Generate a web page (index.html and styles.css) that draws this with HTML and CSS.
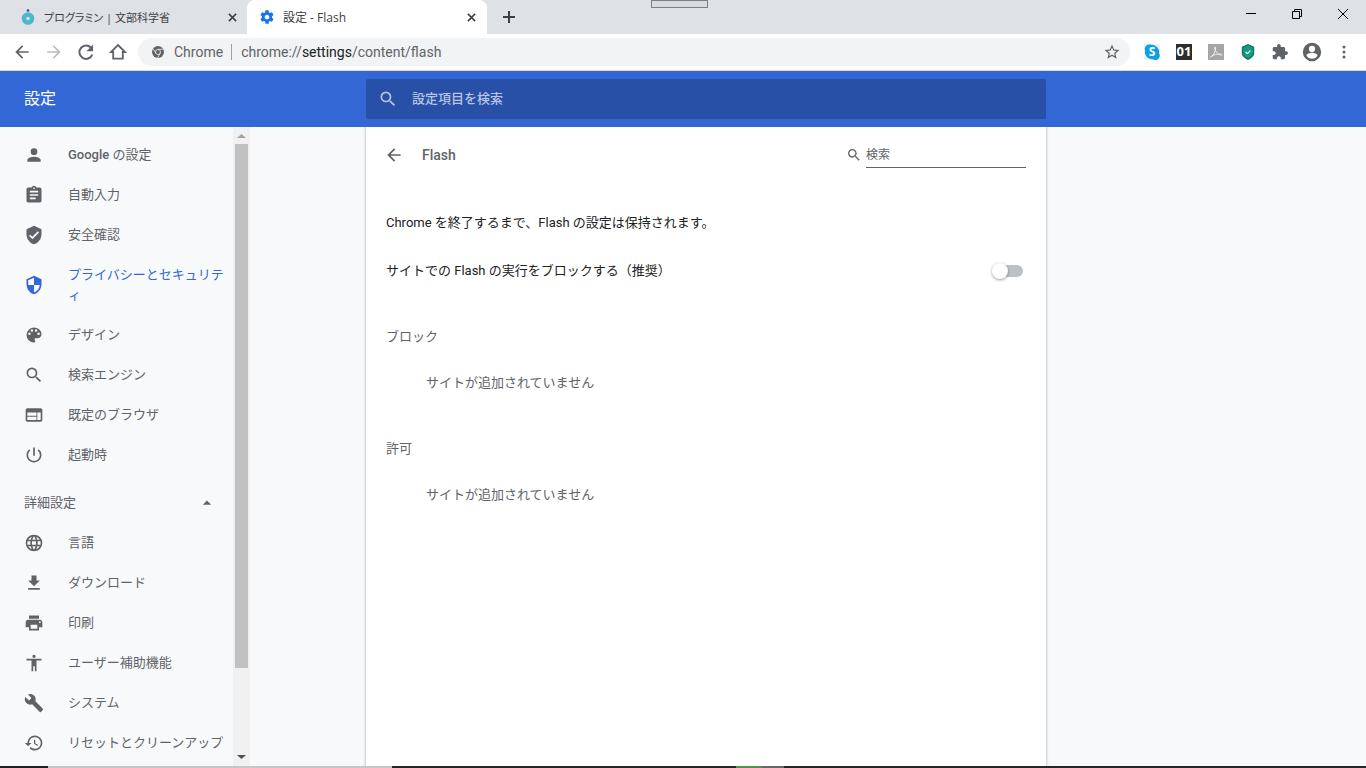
FILE: index.html
```html
<!DOCTYPE html>
<html lang="ja">
<head>
<meta charset="utf-8">
<meta name="viewport" content="width=device-width, initial-scale=1">
<title>設定 - Flash</title>
<link rel="stylesheet" href="styles.css">
</head>
<body>
<svg class="sprite" aria-hidden="true">
  <symbol id="i-close" viewBox="0 0 10 10"><path d="M1 1l8 8M9 1l-8 8" fill="none" stroke="currentColor" stroke-width="1.7"/></symbol>
  <symbol id="i-search" viewBox="0 0 24 24"><path d="M15.5 14h-.79l-.28-.27A6.47 6.47 0 0 0 16 9.5 6.5 6.5 0 1 0 9.5 16c1.61 0 3.09-.59 4.23-1.57l.27.28v.79l5 4.99L20.49 19l-4.99-5zm-6 0C7.01 14 5 11.99 5 9.5S7.01 5 9.5 5 14 7.01 14 9.5 11.99 14 9.5 14z"/></symbol>
  <symbol id="i-back" viewBox="0 0 24 24"><path d="M20 11H7.83l5.59-5.59L12 4l-8 8 8 8 1.41-1.41L7.83 13H20v-2z"/></symbol>
  <symbol id="i-gear" viewBox="0 0 24 24"><path d="M19.43 12.98c.04-.32.07-.64.07-.98s-.03-.66-.07-.98l2.11-1.65c.19-.15.24-.42.12-.64l-2-3.46c-.12-.22-.39-.3-.61-.22l-2.49 1c-.52-.4-1.08-.73-1.69-.98l-.38-2.65C14.46 2.18 14.25 2 14 2h-4c-.25 0-.46.18-.49.42l-.38 2.65c-.61.25-1.17.59-1.69.98l-2.49-1c-.23-.09-.49 0-.61.22l-2 3.46c-.13.22-.07.49.12.64l2.11 1.65c-.04.32-.07.65-.07.98s.03.66.07.98l-2.11 1.65c-.19.15-.24.42-.12.64l2 3.46c.12.22.39.3.61.22l2.49-1c.52.4 1.08.73 1.69.98l.38 2.65c.03.24.24.42.49.42h4c.25 0 .46-.18.49-.42l.38-2.65c.61-.25 1.17-.59 1.69-.98l2.49 1c.23.09.49 0 .61-.22l2-3.46c.12-.22.07-.49-.12-.64l-2.11-1.65zM12 15.5c-1.93 0-3.5-1.57-3.5-3.5s1.57-3.5 3.5-3.5 3.5 1.57 3.5 3.5-1.57 3.5-3.5 3.5z"/></symbol>
</svg>

<header class="tabstrip">
  <div class="tab">
    <svg class="favicon" viewBox="0 0 16 16" aria-hidden="true"><circle cx="8" cy="1.500" r="1.300" fill="#174ea6"/><circle cx="8" cy="9.500" r="6.300" fill="#4fb8c8"/><circle cx="8" cy="9.500" r="1.800" fill="#c5e9ee"/></svg>
    <span class="tab-title">プログラミン | 文部科学省</span>
    <button class="tab-close" aria-label="タブを閉じる"><svg class="s9"><use href="#i-close"/></svg></button>
  </div>
  <div class="tab tab-active">
    <svg class="favicon blue"><use href="#i-gear"/></svg>
    <span class="tab-title">設定 - Flash</span>
    <button class="tab-close" aria-label="タブを閉じる"><svg class="s9"><use href="#i-close"/></svg></button>
  </div>
  <button class="new-tab" aria-label="新しいタブ"><svg class="s12" viewBox="0 0 12 12"><path d="M6 0v12M0 6h12" stroke="currentColor" stroke-width="2"/></svg></button>
  <div class="window-buttons">
    <button aria-label="最小化"><svg class="s10" viewBox="0 0 10 10"><path d="M0 4.500h10" stroke="#000"/></svg></button>
    <button aria-label="元に戻す"><svg class="s10" viewBox="0 0 10 10"><path d="M.5 2.500h7v7h-7zM2.500 2.500v-2h7v7h-2" fill="none" stroke="#000"/></svg></button>
    <button aria-label="閉じる"><svg class="s10" viewBox="0 0 10 10"><path d="M0 0l10 10M10 0L0 10" stroke="#000"/></svg></button>
  </div>
  <div class="grip"></div>
</header>

<div class="toolbar">
  <button class="tool" aria-label="戻る"><svg class="s20"><use href="#i-back"/></svg></button>
  <button class="tool tool-off" aria-label="進む"><svg class="s20" viewBox="0 0 24 24"><path d="M4 11h12.170l-5.590-5.590L12 4l8 8-8 8-1.410-1.410L16.170 13H4z"/></svg></button>
  <button class="tool" aria-label="再読み込み"><svg class="s20" viewBox="0 0 24 24"><path d="M18.500 7.500A8 8 0 1 0 19.600 15" fill="none" stroke="currentColor" stroke-width="2.400"/><path d="M20.500 3v8h-8z"/></svg></button>
  <button class="tool" aria-label="ホーム"><svg class="s20" viewBox="0 0 20 20"><path d="M10 3l7 7h-2.200v6.700H5.200V10H3z" fill="none" stroke="currentColor" stroke-width="1.800"/></svg></button>
  <div class="omnibox">
    <svg class="s12 gray" viewBox="0 0 24 24" aria-hidden="true"><circle cx="12" cy="12" r="12"/><circle cx="12" cy="12" r="5" fill="none" stroke="#f1f3f4" stroke-width="1.600"/><path d="M12 6.500h11M7.500 14.500L2 5M16.500 14.500L11 24" stroke="#f1f3f4" stroke-width="1.500"/></svg>
    <span class="origin">Chrome</span>
    <span class="url" role="textbox" aria-label="アドレス">chrome://<b>settings</b>/content/flash</span>
    <button class="star" aria-label="ブックマーク"><svg class="s18" viewBox="0 0 24 24"><path d="M22 9.240l-7.190-.62L12 2 9.190 8.630 2 9.240l5.460 4.730L5.820 21 12 17.270 18.180 21l-1.630-7.030L22 9.240zM12 15.400l-3.760 2.270 1-4.280-3.320-2.880 4.380-.38L12 6.100l1.710 4.040 4.380.38-3.320 2.880 1 4.280L12 15.400z"/></svg></button>
  </div>
  <button class="tool" aria-label="Skype"><svg class="s16" viewBox="0 0 16 16"><path d="M0 0h16v16H0z" fill="#eef1f3"/><path d="M5 .6a4.400 4.400 0 0 1 3 .2 7.200 7.200 0 0 1 7 8.500 4.300 4.300 0 0 1-6 5.900A7.200 7.200 0 0 1 1.100 6.600 4.300 4.300 0 0 1 5 .6z" fill="#0aa1e2"/><text x="8" y="12" class="skype-s">S</text></svg></button>
  <button class="tool" aria-label="01"><span class="badge">01</span></button>
  <button class="tool" aria-label="PDF"><svg class="s16" viewBox="0 0 16 16"><path d="M0 0h16v16H0z" fill="#a5a5a5"/><path d="M2.500 13.200c3-2 5.500-6 5-9.600-.2-1.400-1.400-.6-1 .6 1 3.800 3.600 6.300 6.600 7 1.200.1 1-1.200-.6-1.200-3.600-.1-7 .9-9.400 2.600-.7.700-.9.900-.6.600z" fill="none" stroke="#eee" stroke-width="1"/></svg></button>
  <button class="tool" aria-label="保護"><svg class="s16" viewBox="0 0 16 16"><path d="M8 0l6.200 2.800v6.700c0 2.600-3.200 5.100-6.200 6.500-3-1.400-6.200-3.900-6.200-6.500V2.800z" fill="#0c7a62"/><path d="M8 1.500l4.800 2.300v5.500c0 2-2.300 3.900-4.800 5.100-2.500-1.200-4.800-3.100-4.800-5.100V3.800z" fill="#169b7c"/><path d="M5.700 8l1.700 1.700 3-3" fill="none" stroke="#fff" stroke-width="1.200"/></svg></button>
  <button class="tool" aria-label="拡張機能"><svg class="s16" viewBox="1 1 22 22"><path d="M20.500 11H19V7c0-1.100-.9-2-2-2h-4V3.500a2.500 2.500 0 0 0-5 0V5H4c-1.100 0-1.990.9-1.990 2v3.800H3.500c1.490 0 2.700 1.210 2.700 2.700s-1.210 2.700-2.700 2.700H2V20c0 1.100.9 2 2 2h3.800v-1.500c0-1.490 1.210-2.700 2.700-2.700s2.700 1.210 2.700 2.700V22H17c1.100 0 2-.9 2-2v-4h1.500a2.500 2.500 0 0 0 0-5z"/></svg></button>
  <button class="tool" aria-label="プロフィール"><svg class="s22" viewBox="0 0 24 24"><path d="M12 2a10 10 0 1 0 0 20 10 10 0 0 0 0-20zm0 3.200a3.400 3.400 0 1 1 0 6.800 3.400 3.400 0 0 1 0-6.800zm0 14.200a7.200 7.200 0 0 1-6-3.600c0-2 4-3 6-3s6 1 6 3a7.200 7.200 0 0 1-6 3.600z"/></svg></button>
  <button class="tool" aria-label="メニュー"><svg class="s18" viewBox="0 0 18 18"><circle cx="9" cy="4" r="1.500"/><circle cx="9" cy="9" r="1.500"/><circle cx="9" cy="14" r="1.500"/></svg></button>
</div>

<div class="appbar">
  <h1>設定</h1>
  <label class="appsearch"><svg class="s20" aria-hidden="true"><use href="#i-search"/></svg><input type="search" placeholder="設定項目を検索" aria-label="設定項目を検索"></label>
</div>

<div class="content">
  <div class="sidebar">
    <nav class="menu" aria-label="設定">
      <a href="#google"><svg class="s20" viewBox="0 0 24 24"><path d="M12 12a4 4 0 1 0 0-8 4 4 0 0 0 0 8zm0 2c-2.670 0-8 1.340-8 4v2h16v-2c0-2.660-5.330-4-8-4z"/></svg><span><b>Google</b> の設定</span></a>
      <a href="#autofill"><svg class="s20" viewBox="0 0 24 24"><path d="M19 3h-4.180a3 3 0 0 0-5.640 0H5c-1.100 0-2 .9-2 2v14c0 1.100.9 2 2 2h14c1.100 0 2-.9 2-2V5c0-1.100-.9-2-2-2zm-7 0a1 1 0 1 1 0 2 1 1 0 0 1 0-2zm2 14H7v-2h7v2zm3-4H7v-2h10v2zm0-4H7V7h10v2z"/></svg><span>自動入力</span></a>
      <a href="#safety"><svg class="s20" viewBox="0 0 24 24"><path d="M12 1L3 5v6c0 5.550 3.840 10.740 9 12 5.160-1.260 9-6.450 9-12V5l-9-4zm-2 16l-4-4 1.410-1.410L10 14.170l6.590-6.590L18 9l-8 8z"/></svg><span>安全確認</span></a>
      <a href="#privacy" class="selected" aria-current="page"><svg class="s20" viewBox="0 0 24 24"><path d="M12 1L3 5v6c0 5.550 3.840 10.740 9 12 5.160-1.260 9-6.450 9-12V5l-9-4zm0 10.990h7c-.53 4.120-3.280 7.790-7 8.940V12H5V6.300l7-3.110v8.800z"/></svg><span>プライバシーとセキュリティ</span></a>
      <a href="#design"><svg class="s20" viewBox="0 0 24 24"><path d="M12 3a9 9 0 0 0 0 18c.83 0 1.500-.67 1.500-1.500 0-.39-.15-.74-.39-1.010-.23-.26-.38-.61-.38-.99 0-.83.67-1.500 1.500-1.500H16a5 5 0 0 0 5-5c0-4.420-4.030-8-9-8zm-5.500 9a1.500 1.500 0 1 1 0-3 1.500 1.500 0 0 1 0 3zm3-4a1.500 1.500 0 1 1 0-3 1.500 1.500 0 0 1 0 3zm5 0a1.500 1.500 0 1 1 0-3 1.500 1.500 0 0 1 0 3zm3 4a1.500 1.500 0 1 1 0-3 1.500 1.500 0 0 1 0 3z"/></svg><span>デザイン</span></a>
      <a href="#engine"><svg class="s20"><use href="#i-search"/></svg><span>検索エンジン</span></a>
      <a href="#browser"><svg class="s20" viewBox="0 0 24 24"><path d="M20 4H4c-1.100 0-1.990.9-1.990 2L2 18c0 1.100.9 2 2 2h16c1.100 0 2-.9 2-2V6c0-1.100-.9-2-2-2zm-5 14H4v-4h11v4zm0-5H4V9h11v4zm5 5h-4V9h4v9z"/></svg><span>既定のブラウザ</span></a>
      <a href="#startup"><svg class="s20" viewBox="0 0 24 24"><path d="M13 3h-2v10h2V3zm4.830 2.170l-1.420 1.420A6.920 6.920 0 0 1 19 12a7 7 0 1 1-11.420-5.420L6.170 5.170A9 9 0 1 0 21 12a8.930 8.930 0 0 0-3.170-6.830z"/></svg><span>起動時</span></a>
      <button class="advanced" aria-expanded="true"><span>詳細設定</span><svg class="s20" viewBox="0 0 24 24"><path d="M7 14l5-5 5 5z"/></svg></button>
      <a href="#lang"><svg class="s20" viewBox="0 0 24 24"><path d="M11.990 2a10 10 0 1 0 .01 20 10 10 0 0 0-.01-20zm6.930 6h-2.950a15.650 15.650 0 0 0-1.380-3.560A8.030 8.030 0 0 1 18.920 8zM12 4.040c.83 1.200 1.480 2.530 1.910 3.960h-3.820c.43-1.430 1.080-2.760 1.910-3.960zM4.260 14a8.200 8.200 0 0 1 0-4h3.380a16.500 16.500 0 0 0 0 4H4.260zm.82 2h2.950c.32 1.250.78 2.450 1.380 3.560A7.990 7.990 0 0 1 5.080 16zm2.950-8H5.080a7.990 7.990 0 0 1 4.330-3.560A15.650 15.650 0 0 0 8.030 8zM12 19.960c-.83-1.200-1.480-2.530-1.910-3.960h3.820c-.43 1.430-1.080 2.760-1.910 3.960zM14.340 14H9.660a14.700 14.700 0 0 1 0-4h4.680a14.700 14.700 0 0 1 0 4zm.25 5.560c.6-1.110 1.060-2.310 1.380-3.560h2.950a8.030 8.030 0 0 1-4.330 3.560zM16.360 14a16.500 16.500 0 0 0 0-4h3.380a8.200 8.200 0 0 1 0 4h-3.380z"/></svg><span>言語</span></a>
      <a href="#download"><svg class="s20" viewBox="0 0 24 24"><path d="M19 9h-4V3H9v6H5l7 7 7-7zM5 18v2h14v-2H5z"/></svg><span>ダウンロード</span></a>
      <a href="#print"><svg class="s20" viewBox="0 0 24 24"><path d="M19 8H5c-1.660 0-3 1.340-3 3v6h4v4h12v-4h4v-6c0-1.660-1.340-3-3-3zm-3 11H8v-5h8v5zm3-7a1 1 0 1 1 0-2 1 1 0 0 1 0 2zm-1-9H6v4h12V3z"/></svg><span>印刷</span></a>
      <a href="#a11y"><svg class="s20" viewBox="0 0 24 24"><path d="M12 2a2 2 0 1 1 0 4 2 2 0 0 1 0-4zm9 7h-6v13h-2v-6h-2v6H9V9H3V7h18v2z"/></svg><span>ユーザー補助機能</span></a>
      <a href="#system"><svg class="s20" viewBox="0 0 24 24"><path d="M22.700 19l-9.100-9.100c.9-2.300.4-5-1.500-6.900-2-2-5-2.400-7.400-1.300L9 6 6 9 1.600 4.700C.4 7.100.9 10.100 2.900 12.100c1.900 1.900 4.600 2.400 6.900 1.500l9.100 9.100c.4.400 1 .4 1.400 0l2.300-2.300c.5-.4.5-1.100.1-1.400z"/></svg><span>システム</span></a>
      <a href="#reset"><svg class="s20" viewBox="0 0 24 24"><path d="M13 3a9 9 0 0 0-9 9H1l3.890 3.890.07.14L9 12H6a7 7 0 1 1 2.060 4.940l-1.420 1.420A9 9 0 1 0 13 3zm-1 5v5l4.280 2.540.72-1.210-3.500-2.080V8H12z"/></svg><span>リセットとクリーンアップ</span></a>
    </nav>
    <div class="scrollbar" aria-hidden="true">
      <svg class="s17 scroll-up" viewBox="0 0 17 17"><path d="M4 11h9L8.500 7z"/></svg>
      <div class="track"><div class="thumb"></div></div>
      <svg class="s17" viewBox="0 0 17 17"><path d="M4 6h9l-4.500 4z"/></svg>
    </div>
  </div>

  <main class="card">
    <div class="card-head">
      <button class="back" aria-label="戻る"><svg class="s20"><use href="#i-back"/></svg></button>
      <h2>Flash</h2>
      <label class="site-search"><svg class="s16"><use href="#i-search"/></svg><input type="search" placeholder="検索" aria-label="検索"></label>
    </div>
    <p class="row">Chrome を終了するまで、Flash の設定は保持されます。</p>
    <div class="row"><label for="block">サイトでの Flash の実行をブロックする（推奨）</label><input id="block" class="toggle" type="checkbox" role="switch"></div>
    <section>
      <h3>ブロック</h3>
      <p class="row empty">サイトが追加されていません</p>
    </section>
    <section>
      <h3>許可</h3>
      <p class="row empty">サイトが追加されていません</p>
    </section>
  </main>
</div>

<div class="taskbar" aria-hidden="true"></div>
</body>
</html>
```
FILE: styles.css
```css
* { box-sizing: border-box; }

body {
  margin: 0;
  height: 100vh;
  display: flex;
  flex-direction: column;
  overflow: hidden;
  background: #f8f9fb;
  color: #202124;
  font: 13px/20px Roboto, "Noto Sans CJK JP", sans-serif;
}

h1, h2, h3, p { margin: 0; font-weight: 400; }
button { border: 0; padding: 0; background: none; color: inherit; font: inherit; }
input { font: inherit; color: inherit; border: 0; padding: 0; background: none; min-width: 0; outline: 0; }
svg { display: block; flex: none; fill: currentColor; }

.sprite { position: absolute; width: 0; height: 0; }
.s9 { width: 9px; height: 9px; }
.s10 { width: 10px; height: 10px; }
.s12 { width: 12px; height: 12px; }
.s16 { width: 16px; height: 16px; }
.s17 { width: 17px; height: 17px; }
.s18 { width: 18px; height: 18px; }
.s20 { width: 20px; height: 20px; }
.s22 { width: 22px; height: 22px; }
.gray { color: #5f6368; }

/* Tab strip */
.tabstrip {
  position: relative;
  flex: none;
  display: flex;
  height: 34px;
  background: #dee1e6;
  color: #3c4043;
}
.tab {
  display: flex;
  align-items: center;
  gap: 8px;
  width: 247px;
  padding: 0 10px 0 20px;
  font: 11px/16px "Open Sans", "Noto Sans CJK JP", sans-serif;
  font-feature-settings: "palt";
}
.tab-active {
  width: 240px;
  padding: 0 11px 0 12px;
  border-radius: 8px 8px 0 0;
  background: #fff;
  font-size: 12px;
}
.favicon { width: 16px; height: 16px; }
.blue { color: #1a73e8; }
.tab-title { flex: 1; padding-top: 2px; white-space: nowrap; overflow: hidden; }
.tab-close { display: grid; place-items: center; width: 10px; height: 16px; }
.new-tab { display: grid; place-items: center; width: 44px; }
.window-buttons { display: flex; margin-left: auto; height: 28px; }
.window-buttons button { display: grid; place-items: center; width: 46px; }
.grip {
  position: absolute;
  top: 0;
  left: 651px;
  width: 57px;
  height: 8px;
  border: 1px solid #7d8085;
  background: #d8dbe0;
}

/* Toolbar */
.toolbar {
  flex: none;
  display: flex;
  align-items: center;
  height: 37px;
  padding: 0 6px;
  border-bottom: 1px solid #dadce0;
  background: #fff;
  color: #5f6368;
}
.tool { display: grid; place-items: center; flex: none; width: 32px; height: 28px; }
.tool-off { color: #babcbe; }
.omnibox {
  flex: 1;
  display: flex;
  align-items: center;
  height: 28px;
  margin: 0 6px 0 4px;
  padding: 0 9px 0 14px;
  border-radius: 14px;
  background: #f1f3f4;
  font: 14px/18px Roboto, sans-serif;
}
.origin { margin-left: 10px; padding-right: 8px; border-right: 1px solid #9aa0a6; line-height: 16px; }
.url { flex: 1; margin-left: 9px; }
.url b { font-weight: 400; color: #202124; }
.badge {
  width: 16px;
  height: 16px;
  background: #2d2d2d;
  color: #fff;
  font: bold 13px/15px "Open Sans", sans-serif;
}
.skype-s { fill: #fff; font: bold 12px "Open Sans", sans-serif; text-anchor: middle; }

/* Blue header */
.appbar {
  flex: none;
  display: flex;
  align-items: center;
  height: 56px;
  background: #3367d6;
  color: #fff;
}
.appbar h1 { flex: none; width: 366px; padding-left: 24px; font-size: 16px; line-height: 24px; }
.appsearch {
  flex: 0 1 680px;
  display: flex;
  align-items: center;
  gap: 14px;
  height: 40px;
  padding: 0 12px;
  border-radius: 2px;
  background: #2850a7;
  color: #b8c6e4;
}
.appsearch input { flex: 1; font-weight: 500; }
.appsearch input::placeholder { color: #b8c6e4; opacity: 1; }

/* Body */
.content { flex: 1; display: flex; gap: 116px; min-height: 0; }
.sidebar { flex: none; display: flex; width: 250px; }
.menu { flex: 1; padding: 8px 0; overflow: hidden; color: #5f6368; }
.menu a {
  display: flex;
  align-items: center;
  gap: 24px;
  padding: 10px 6px 10px 24px;
  color: inherit;
  text-decoration: none;
}
.menu b { font-weight: 500; }
.menu a.selected { color: #3367d6; }
.advanced {
  display: flex;
  align-items: center;
  justify-content: space-between;
  width: 100%;
  height: 40px;
  margin-top: 8px;
  padding: 0 16px 0 24px;
}

.scrollbar { display: flex; flex-direction: column; width: 17px; background: #f1f1f1; color: #505050; }
.scroll-up { color: #a3a3a3; }
.track { flex: 1; padding: 0 2px; }
.thumb { height: 86.6%; background: #c1c1c1; }

.card {
  flex: 0 1 680px;
  padding: 0 20px;
  background: #fff;
  box-shadow: 0 0 2px 1px rgba(60, 64, 67, .25);
  clip-path: inset(0 -4px 0 -4px);
}
.card-head { display: flex; align-items: center; height: 56px; margin-bottom: 16px; color: #5f6368; }
.back { width: 20px; margin-right: 16px; }
.card-head .back svg { margin-left: -2px; }
.card-head h2 { flex: 1; font-size: 14px; font-weight: 500; }
.site-search { display: flex; align-items: center; gap: 4px; }
.site-search input { width: 160px; height: 26px; border-bottom: 1px solid #5f6368; font-size: 12px; }
.site-search input::placeholder { color: #5f6368; opacity: 1; }
.row { display: flex; align-items: center; justify-content: space-between; min-height: 48px; }
.empty { padding-left: 40px; color: #5f6368; }
.card h3 { padding: 32px 0 12px; font-size: 13px; color: #5f6368; }

.toggle {
  appearance: none;
  display: flex;
  align-items: center;
  width: 28px;
  height: 12px;
  margin: 0 3px;
  border-radius: 6px;
  background: #bdc1c6;
}
.toggle::before {
  content: "";
  width: 16px;
  height: 16px;
  margin-left: -3px;
  border-radius: 50%;
  background: #fff;
  box-shadow: 0 1px 3px rgba(0, 0, 0, .4);
}

/* Sliver of the desktop taskbar under the window */
.taskbar {
  flex: none;
  height: 2px;
  background: linear-gradient(to right, #222 48px, #c4c6c8 48px 392px, #25272a 392px 736px, #55904f 736px 762px, #66686a 762px 784px, #25272a 784px);
}
```
